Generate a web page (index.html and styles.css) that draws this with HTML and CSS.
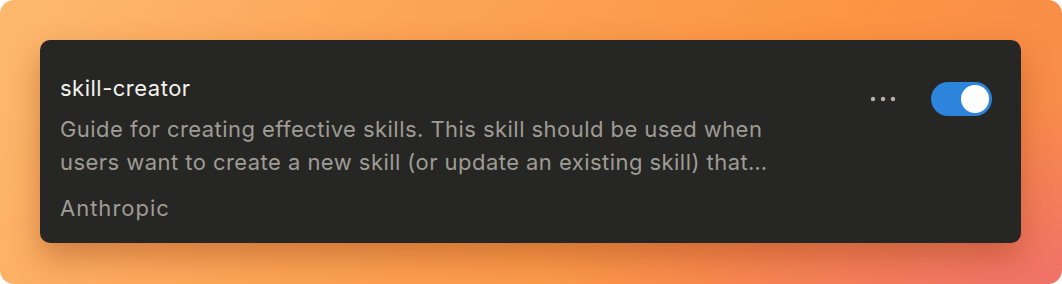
FILE: index.html
```html
<!DOCTYPE html>
<html>
<head>
<meta charset="utf-8">
<link rel="stylesheet" href="styles.css">
</head>
<body>
<div class="frame">
  <div class="card">
    <div class="info">
      <div class="title">skill-creator</div>
      <div class="desc">Guide for creating effective skills. This skill should be used when users want to create a new skill (or update an existing skill) that extends Claude's capabilities with specialized knowledge, workflows, or tool integrations.</div>
      <div class="author">Anthropic</div>
    </div>
    <div class="actions">
      <button class="more" aria-label="More options">
        <svg width="26" height="6" viewBox="0 0 26 6"><circle cx="3" cy="3" r="2.2"/><circle cx="13" cy="3" r="2.2"/><circle cx="23" cy="3" r="2.2"/></svg>
      </button>
      <div class="toggle"><span class="knob"></span></div>
    </div>
  </div>
</div>
</body>
</html>
```
FILE: styles.css
```css
html, body {
  margin: 0;
  padding: 0;
  background: #ffffff;
}
body {
  width: 1062px;
  height: 284px;
  overflow: hidden;
  font-family: Inter, "Noto Sans", sans-serif;
}
.frame {
  width: 1062px;
  height: 284px;
  box-sizing: border-box;
  border-radius: 14px;
  padding: 40px 41px 41px 40px;
  background:
    radial-gradient(ellipse 70% 90% at 100% 100%, rgba(241, 112, 106, 0.95), rgba(241, 112, 106, 0) 70%),
    linear-gradient(120deg, #fdb96f 0%, #fca456 35%, #fb9542 70%, #f7884c 100%);
}
.card {
  height: 203px;
  box-sizing: border-box;
  background: #262624;
  border-radius: 10px;
  display: flex;
  justify-content: space-between;
  align-items: flex-start;
  padding: 33px 29px 0 20px;
  box-shadow: 0 14px 30px rgba(150, 60, 20, 0.42);
}
.info {
  width: 732px;
}
.title {
  color: #f4f2ec;
  font-size: 22px;
  line-height: 30px;
  letter-spacing: 0.5px;
  font-weight: 400;
}
.desc {
  color: #9e9c94;
  font-size: 22px;
  line-height: 33px;
  letter-spacing: 0.45px;
  margin-top: 10px;
  display: -webkit-box;
  -webkit-line-clamp: 2;
  -webkit-box-orient: vertical;
  overflow: hidden;
}
.author {
  color: #9e9c94;
  font-size: 22px;
  line-height: 30px;
  letter-spacing: 1px;
  margin-top: 14px;
}
.actions {
  display: flex;
  align-items: center;
  gap: 35px;
  margin-top: 9px;
}
.more {
  background: none;
  border: none;
  padding: 0;
  display: flex;
  fill: #b3b1a9;
}
.toggle {
  width: 61px;
  height: 34px;
  border-radius: 17px;
  background: #2c84db;
  box-sizing: border-box;
  padding: 3px;
  display: flex;
  justify-content: flex-end;
}
.knob {
  width: 28px;
  height: 28px;
  border-radius: 50%;
  background: #ffffff;
}
```
